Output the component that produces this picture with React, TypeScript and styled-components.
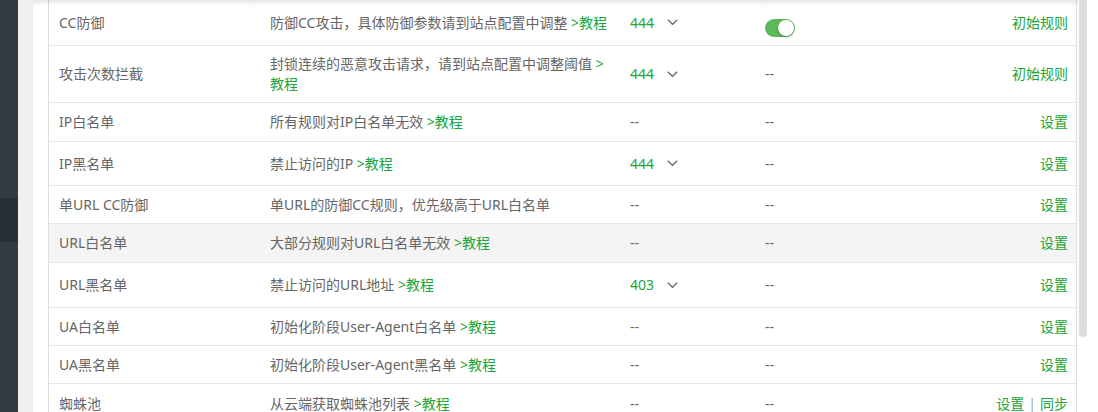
import React from "react";
import styled, { createGlobalStyle } from "styled-components";

const GREEN = "#20a53a";

const Global = createGlobalStyle`
  html, body { margin: 0; padding: 0; background: #fff; }
  body {
    font-family: "Noto Sans", "Noto Sans CJK SC", sans-serif;
    font-size: 14px;
    color: #666;
    overflow: hidden;
  }
`;

const Page = styled.div`
  display: flex;
  width: 1098px;
  height: 412px;
  overflow: hidden;
`;

const Sidebar = styled.div`
  width: 18px;
  flex: none;
  background: #333b43;
  display: flex;
  flex-direction: column;
`;

const SideSpacer = styled.div`
  height: 198px;
`;

const SideActive = styled.div`
  height: 44px;
  background: #292f37;
`;

const Gutter = styled.div`
  width: 15px;
  flex: none;
  background: #f0f0f0;
`;

const Content = styled.div`
  position: relative;
  width: 1045px;
  flex: none;
  padding-left: 15px;
  box-sizing: border-box;
  background: #fff;
`;

const TopShadow = styled.div`
  position: absolute;
  left: 0;
  right: 0;
  top: 0;
  height: 6px;
  background: linear-gradient(to bottom, rgba(0, 0, 0, 0.1), rgba(0, 0, 0, 0));
  pointer-events: none;
`;

const Table = styled.div`
  width: 1029px;
  border-left: 1px solid #ddd;
  border-right: 1px solid #ddd;
  box-sizing: border-box;
`;

const Row = styled.div<{ $h: number; $hover?: boolean }>`
  display: grid;
  grid-template-columns: 211px 360px 135px 1fr auto;
  align-items: center;
  height: ${(p) => p.$h}px;
  box-sizing: border-box;
  border-bottom: 1px solid #e8e8e8;
  background: ${(p) => (p.$hover ? "#f4f4f4" : "#fff")};
  line-height: 20px;
`;

const Cell = styled.div`
  padding-left: 10px;
  white-space: nowrap;
`;

const DescCell = styled.div`
  padding: 0 10px;
  line-height: 20px;
`;

const ActionCell = styled.div`
  padding-right: 8px;
  text-align: right;
  white-space: nowrap;
`;

const Link = styled.span`
  color: ${GREEN};
`;

const Sep = styled.span`
  color: #8aa6c1;
  margin: 0 4px;
`;

const Select = styled.div`
  display: flex;
  align-items: center;
  gap: 13px;
  color: ${GREEN};
`;

const Chevron = () => (
  <svg width="11" height="7" viewBox="0 0 11 7" fill="none">
    <path d="M0.8 0.8 L5.5 5.3 L10.2 0.8" stroke="#666" strokeWidth="1.2" />
  </svg>
);

const Toggle = styled.div`
  position: relative;
  width: 30px;
  height: 18px;
  border-radius: 9px;
  background: #5cb85c;
  margin-top: 10px;
  &::after {
    content: "";
    position: absolute;
    right: 1px;
    top: 1px;
    width: 16px;
    height: 16px;
    border-radius: 50%;
    background: #fff;
    box-shadow: 0 1px 2px rgba(0, 0, 0, 0.3);
  }
`;

const Scroll = styled.div`
  width: 8px;
  flex: none;
  margin-left: 1px;
`;

const Thumb = styled.div`
  height: 337px;
  background: #ddd;
  border-radius: 0 0 4px 4px;
`;

type RowData = {
  name: string;
  desc: string;
  tut?: boolean;
  value?: string;
  toggle?: boolean;
  actions: string[];
  h: number;
  hover?: boolean;
};

const rows: RowData[] = [
  { name: "CC防御", desc: "防御CC攻击，具体防御参数请到站点配置中调整", tut: true, value: "444", toggle: true, actions: ["初始规则"], h: 46 },
  { name: "攻击次数拦截", desc: "封锁连续的恶意攻击请求，请到站点配置中调整阈值", tut: true, value: "444", actions: ["初始规则"], h: 57 },
  { name: "IP白名单", desc: "所有规则对IP白名单无效", tut: true, actions: ["设置"], h: 39 },
  { name: "IP黑名单", desc: "禁止访问的IP", tut: true, value: "444", actions: ["设置"], h: 44 },
  { name: "单URL CC防御", desc: "单URL的防御CC规则，优先级高于URL白名单", actions: ["设置"], h: 38 },
  { name: "URL白名单", desc: "大部分规则对URL白名单无效", tut: true, actions: ["设置"], h: 39, hover: true },
  { name: "URL黑名单", desc: "禁止访问的URL地址", tut: true, value: "403", actions: ["设置"], h: 45 },
  { name: "UA白名单", desc: "初始化阶段User-Agent白名单", tut: true, actions: ["设置"], h: 38 },
  { name: "UA黑名单", desc: "初始化阶段User-Agent黑名单", tut: true, actions: ["设置"], h: 38 },
  { name: "蜘蛛池", desc: "从云端获取蜘蛛池列表", tut: true, actions: ["设置", "同步"], h: 40 },
];

export default function App() {
  return (
    <Page>
      <Global />
      <Sidebar>
        <SideSpacer />
        <SideActive />
      </Sidebar>
      <Gutter />
      <Content>
        <Table>
          {rows.map((r) => (
            <Row key={r.name} $h={r.h} $hover={r.hover}>
              <Cell>{r.name}</Cell>
              <DescCell>
                {r.desc}
                {r.tut && <Link> &gt;教程</Link>}
              </DescCell>
              <Cell>
                {r.value ? (
                  <Select>
                    {r.value}
                    <Chevron />
                  </Select>
                ) : (
                  "--"
                )}
              </Cell>
              <Cell>{r.toggle ? <Toggle /> : "--"}</Cell>
              <ActionCell>
                {r.actions.map((a, i) => (
                  <React.Fragment key={a}>
                    {i > 0 && <Sep>|</Sep>}
                    <Link>{a}</Link>
                  </React.Fragment>
                ))}
              </ActionCell>
            </Row>
          ))}
        </Table>
        <TopShadow />
      </Content>
      <Scroll>
        <Thumb />
      </Scroll>
    </Page>
  );
}
